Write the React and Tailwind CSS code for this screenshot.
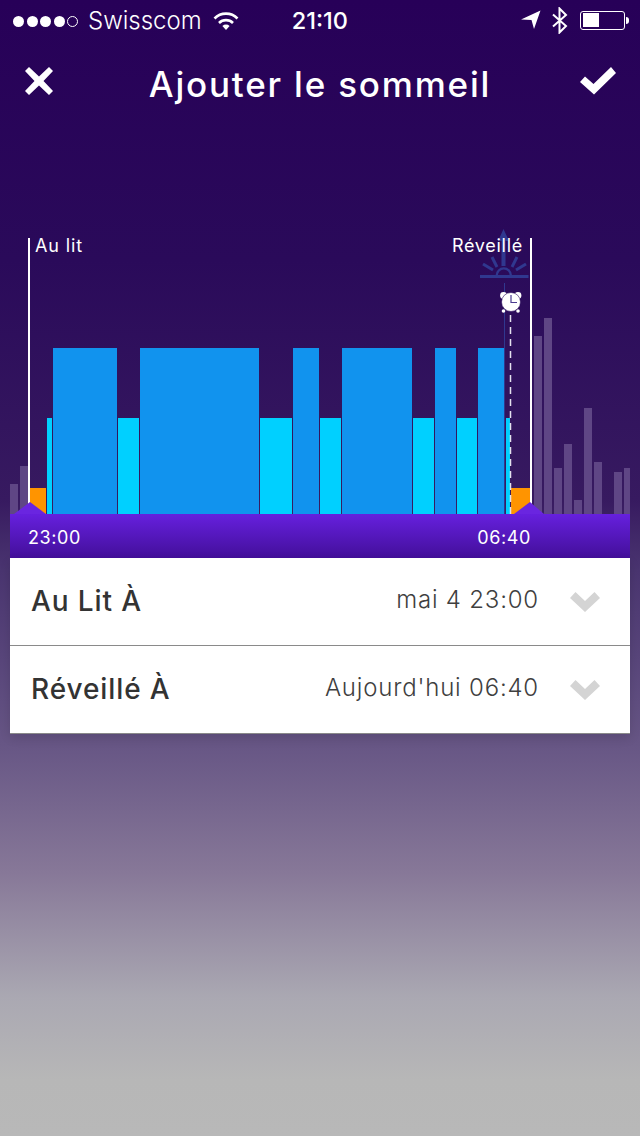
import React from "react";

const LEFT_GHOST = [
  [10, 8, 484],
  [20, 8, 466],
];
const RIGHT_GHOST = [
  [534, 8, 336],
  [544, 8, 318],
  [554, 8, 468],
  [564, 8, 444],
  [574, 8, 500],
  [584, 8, 408],
  [594, 8, 462],
  [614, 8, 472],
  [624, 6, 468],
];
// x, width, top: deep sleep is the taller bar
const SLEEP = [
  [47, 5, 418, "#00d0ff"],
  [53, 64, 348, "#1193ee"],
  [118, 21, 418, "#00d0ff"],
  [140, 119, 348, "#1193ee"],
  [260, 32, 418, "#00d0ff"],
  [293, 26, 348, "#1193ee"],
  [320, 21, 418, "#00d0ff"],
  [342, 70, 348, "#1193ee"],
  [413, 21, 418, "#00d0ff"],
  [435, 21, 348, "#1193ee"],
  [457, 20, 418, "#00d0ff"],
  [478, 27, 348, "#1193ee"],
  [506, 4, 418, "#00d0ff"],
];

const StatusBar = () => (
  <div className="h-10 pt-[2px] flex items-center relative text-white font-['Inter',sans-serif]">
    <div className="flex items-center gap-[2.5px] ml-[13px]">
      {[0, 1, 2, 3].map((i) => (
        <div key={i} className="w-[11px] h-[11px] rounded-full bg-white" />
      ))}
      <div className="w-[11px] h-[11px] rounded-full border border-white" />
    </div>
    <span className="ml-[10px] text-[24px] font-light leading-none">Swisscom</span>
    <svg width="26" height="20" viewBox="0 0 26 20" className="ml-[11px]" fill="none" stroke="#fff" strokeWidth="2.6">
      <path d="M1.5 7.5a16 16 0 0 1 23 0" />
      <path d="M6 12a10 10 0 0 1 14 0" />
      <path d="M13 19l-3.6-4a5.2 5.2 0 0 1 7.2 0z" fill="#fff" stroke="none" />
    </svg>
    <span className="ml-[53px] text-[23.5px] font-medium leading-none">21:10</span>
    <div className="absolute right-[11px] top-0 h-10 flex items-center">
      <svg width="20" height="20" viewBox="0 0 20 20" className="mr-[10px]">
        <path d="M0 9.5 19.5 0.5 13 19 10.5 10z" fill="#fff" />
      </svg>
      <svg width="18" height="27" viewBox="0 0 18 27" fill="none" stroke="#fff" strokeWidth="2" className="mr-[11px]">
        <path d="M2 7.5 15 19 8.5 25.5V1.5L15 8 2 19.5" />
      </svg>
      <div className="w-[45px] h-[19px] rounded-[3px] border border-white p-[1.5px]">
        <div className="w-[16px] h-full bg-white" />
      </div>
      <div className="w-[3px] h-[7px] rounded-r-sm bg-white ml-px" />
    </div>
  </div>
);

const Header = () => (
  <div className="h-[85px] flex items-center justify-between pl-[25px] pr-[24px] pb-[3px]">
    <svg width="28" height="28" viewBox="0 0 28 28">
      <path d="M4 0 14 9.5 24 0 28 4 18.5 14 28 24 24 28 14 18.5 4 28 0 24 9.5 14 0 4z" fill="#fff" />
    </svg>
    <h1 className="text-white text-[35px] tracking-[1.8px] font-medium leading-none font-['Inter',sans-serif] mt-[6px] ml-[7px]">
      Ajouter le sommeil
    </h1>
    <svg width="36" height="28" viewBox="0 0 36 28">
      <path d="M0 15 5 9.5 13.5 17 31 0 36 6 14 27.5z" fill="#fff" />
    </svg>
  </div>
);

const Chart = () => (
  <div className="relative h-[294px] mt-[95px]">
    <svg width="620" height="294" viewBox="10 220 620 294" className="block">
      {[...LEFT_GHOST, ...RIGHT_GHOST].map(([x, w, y]) => (
        <rect key={x} x={x} y={y} width={w} height={514 - y} fill="#5f4685" />
      ))}
      <rect x="30" y="488" width="16" height="26" fill="#ff9400" />
      <rect x="511" y="488" width="19" height="26" fill="#ff9400" />
      {SLEEP.map(([x, w, y, c]) => (
        <rect key={x} x={x} y={y} width={w} height={514 - y} fill={c} />
      ))}

      {/* sunrise mark */}
      <g fill="#30388f" stroke="none">
        <path d="M503.5 229 509 241H505.5V266H501.5V241H498z" />
        <rect x="480" y="275" width="48.5" height="3" />
        <path d="M495.5 275.5a8.3 8.3 0 0 1 16.6 0h-2.4a5.9 5.9 0 0 0-11.8 0z" />
      </g>
      <g stroke="#30388f" strokeWidth="3" fill="none">
        <path d="M492 257 497 267" />
        <path d="M517 257 512 267" />
        <path d="M483 264 493 270" />
        <path d="M526 264 516 270" />
      </g>
      <rect x="504" y="283" width="1" height="231" fill="#30388f" />

      {/* wake line and alarm clock */}
      <line x1="510.5" y1="315" x2="510.5" y2="514" stroke="#e4e0ee" strokeWidth="1.5" strokeDasharray="7 5" />
      <g>
        <circle cx="503.5" cy="295.5" r="3.4" fill="#fff" />
        <circle cx="518" cy="295.5" r="3.4" fill="#fff" />
        <circle cx="503.5" cy="311" r="1.8" fill="#fff" />
        <circle cx="518" cy="311" r="1.8" fill="#fff" />
        <circle cx="511" cy="302" r="9.5" fill="#fff" stroke="#2a0a5c" strokeWidth="0.6" />
        <path d="M511 295V302.5H517" stroke="#4a3a8f" strokeWidth="1.2" fill="none" />
      </g>

      <rect x="28" y="238" width="2" height="266" fill="#fff" />
      <rect x="530" y="238" width="2" height="266" fill="#fff" />
      <path d="M14 514 30 502 46 514z" fill="#6a25e0" />
      <path d="M514 514 530 502 544 514z" fill="#6a25e0" />
    </svg>
    <span className="absolute left-[25px] top-[16px] text-white text-[18px] tracking-[0.9px] leading-5 font-['Inter',sans-serif]">
      Au lit
    </span>
    <span className="absolute left-[442px] top-[16px] text-white text-[18px] tracking-[0.7px] leading-5 font-['Inter',sans-serif]">
      Réveillé
    </span>
  </div>
);

const Chevron = () => (
  <svg width="30" height="20" viewBox="0 0 30 20" className="ml-[31px]">
    <path d="M0 6 5.5 0 15 9 24.5 0 30 6 15 20z" fill="#d4d4d4" />
  </svg>
);

const Row = ({ label, value, className }) => (
  <div className={`flex items-center pl-[21px] pr-[30px] ${className}`}>
    <span className="text-[28px] tracking-[0.9px] font-[450] text-[#333] mb-[2px] flex-1">{label}</span>
    <span className="text-[24px] tracking-[0.8px] font-light text-[#3f3f3f] mb-[3px]">{value}</span>
    <Chevron />
  </div>
);

export default function App() {
  return (
    <div className="w-[640px] h-[1136px] overflow-hidden bg-[linear-gradient(180deg,#270058_0px,#2a0a5a_260px,#371a60_500px,#4a3570_570px,#675685_745px,#877898_873px,#aaa8b2_997px,#b7b7b7_1080px,#b8b8b8_1136px)]">
      <StatusBar />
      <Header />
      <div className="px-[10px]">
        <Chart />
        <div className="h-11 pt-[2px] flex items-center justify-between pl-[18px] pr-[99px] bg-[linear-gradient(180deg,#6620de,#430f9a)] text-white text-[18px] tracking-[0.6px] font-['Inter',sans-serif]">
          <span>23:00</span>
          <span>06:40</span>
        </div>
        <div className="bg-white border-b border-[#8a8a8a] shadow-[0_4px_10px_rgba(0,0,0,0.12)] font-['Inter',sans-serif]">
          <Row label="Au Lit À" value="mai 4 23:00" className="h-[88px] border-b border-[#8a8a8a]" />
          <Row label="Réveillé À" value="Aujourd'hui 06:40" className="h-[87px]" />
        </div>
      </div>
    </div>
  );
}
